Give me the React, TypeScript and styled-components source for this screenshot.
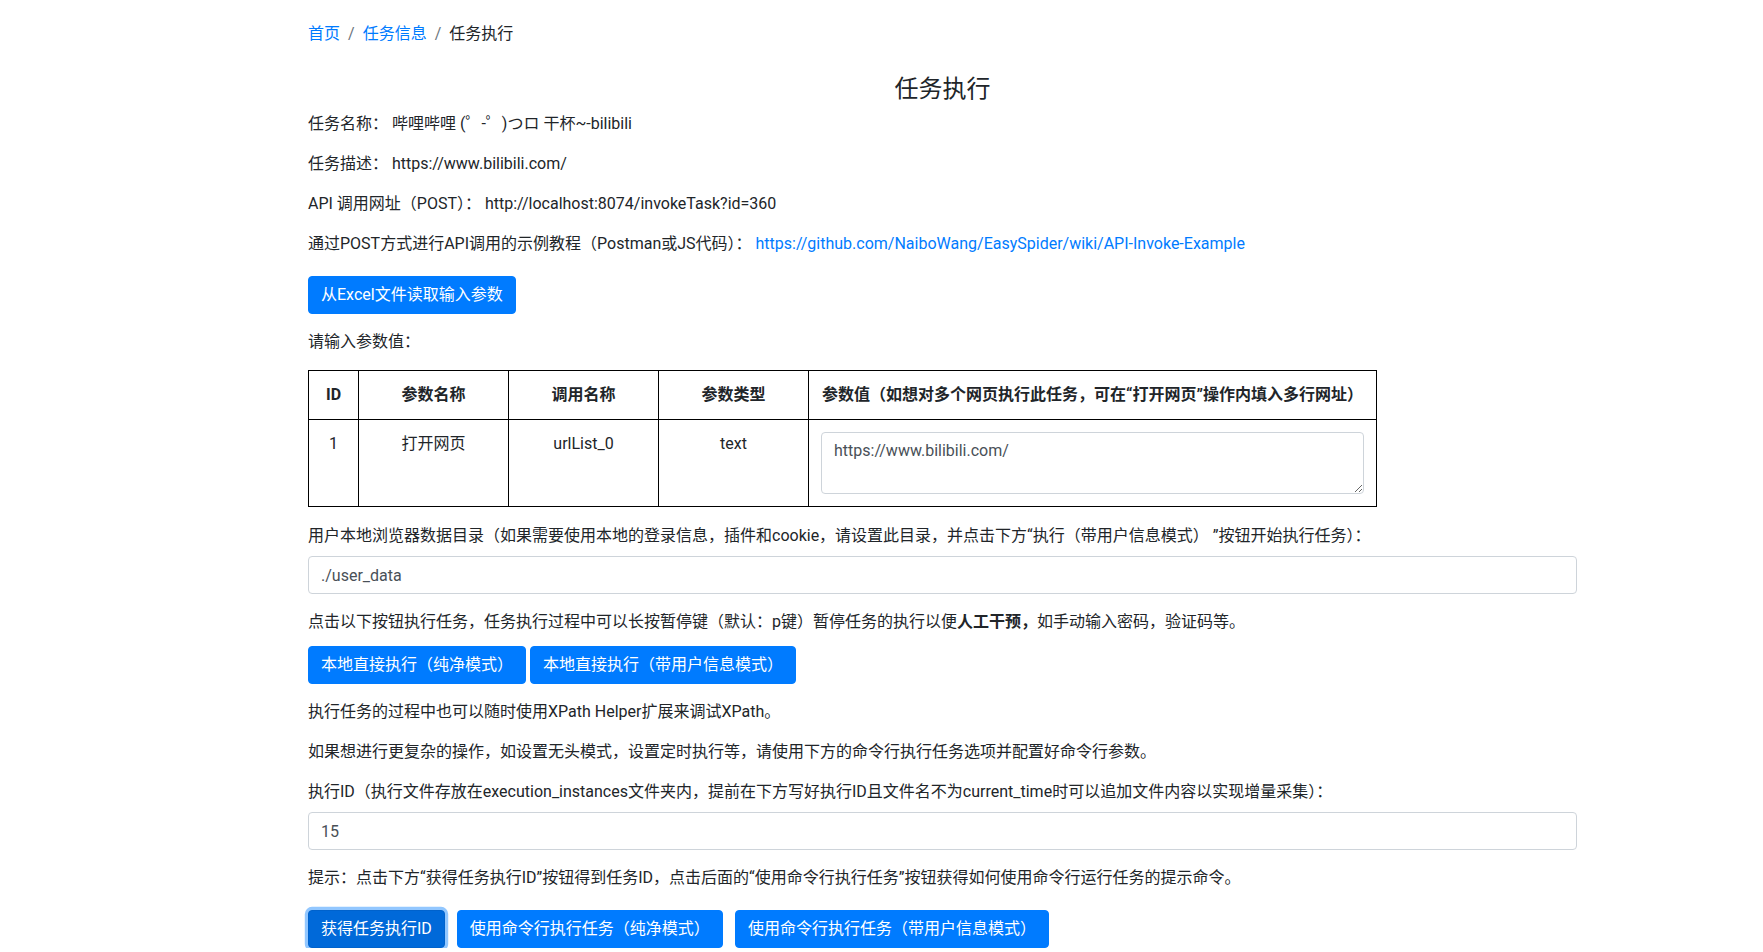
import React from 'react';
import styled, { createGlobalStyle, css } from 'styled-components';

const GlobalStyle = createGlobalStyle`
  html, body {
    margin: 0;
    padding: 0;
    background: #fff;
  }
  body {
    font-family: Roboto, "Noto Sans CJK SC", "Noto Sans", sans-serif;
    font-size: 16px;
    line-height: 1.5;
    color: #212529;
  }
  * {
    box-sizing: border-box;
  }
`;

const params = [{ id: 1, name: '打开网页', call: 'urlList_0', type: 'text', value: 'https://www.bilibili.com/' }];

const App = () => {
  return (
    <>
      <GlobalStyle />
      <Wrapper>
        <Breadcrumb>
          <Crumb>
            <CrumbLink href="#">首页</CrumbLink>
          </Crumb>
          <Crumb>
            <CrumbLink href="#">任务信息</CrumbLink>
          </Crumb>
          <Crumb $active>任务执行</Crumb>
        </Breadcrumb>

        <Title>任务执行</Title>

        <Text>任务名称： 哔哩哔哩 (゜-゜)つロ 干杯~-bilibili</Text>
        <Text>任务描述： https://www.bilibili.com/</Text>
        <Text>API 调用网址（POST）： http://localhost:8074/invokeTask?id=360</Text>
        <Text>
          通过POST方式进行API调用的示例教程（Postman或JS代码）：{' '}
          <Link href="#">https://github.com/NaiboWang/EasySpider/wiki/API-Invoke-Example</Link>
        </Text>

        <ButtonRow $top={4} $bottom={16}>
          <Button>从Excel文件读取输入参数</Button>
        </ButtonRow>

        <Text>请输入参数值：</Text>

        <ParamTable>
          <colgroup>
            <Col $w={50} />
            <Col $w={150} />
            <Col $w={150} />
            <Col $w={150} />
            <Col />
          </colgroup>
          <thead>
            <tr>
              <Th>ID</Th>
              <Th>参数名称</Th>
              <Th>调用名称</Th>
              <Th>参数类型</Th>
              <Th>参数值（如想对多个网页执行此任务，可在“打开网页”操作内填入多行网址）</Th>
            </tr>
          </thead>
          <tbody>
            {params.map((p) => (
              <tr key={p.id}>
                <Td>{p.id}</Td>
                <Td>{p.name}</Td>
                <Td>{p.call}</Td>
                <Td>{p.type}</Td>
                <Td>
                  <TextArea rows={2} defaultValue={p.value} />
                </Td>
              </tr>
            ))}
          </tbody>
        </ParamTable>

        <FormGroup>
          <Label>
            用户本地浏览器数据目录（如果需要使用本地的登录信息，插件和cookie，请设置此目录，并点击下方“执行（带用户信息模式） ”按钮开始执行任务）：
          </Label>
          <Input defaultValue="./user_data" />
        </FormGroup>

        <Text $bottom={12}>
          点击以下按钮执行任务，任务执行过程中可以长按暂停键（默认：p键）暂停任务的执行以便<b>人工干预，</b>如手动输入密码，验证码等。
        </Text>

        <ButtonRow $gap={4} $bottom={16}>
          <Button>本地直接执行（纯净模式）</Button>
          <Button>本地直接执行（带用户信息模式）</Button>
        </ButtonRow>

        <Text>执行任务的过程中也可以随时使用XPath Helper扩展来调试XPath。</Text>
        <Text>如果想进行更复杂的操作，如设置无头模式，设置定时执行等，请使用下方的命令行执行任务选项并配置好命令行参数。</Text>

        <FormGroup>
          <Label>
            执行ID（执行文件存放在execution_instances文件夹内，提前在下方写好执行ID且文件名不为current_time时可以追加文件内容以实现增量采集）：
          </Label>
          <Input defaultValue="15" />
        </FormGroup>

        <Text $bottom={20}>
          提示：点击下方“获得任务执行ID”按钮得到任务ID，点击后面的“使用命令行执行任务”按钮获得如何使用命令行运行任务的提示命令。
        </Text>

        <ButtonRow $gap={12}>
          <Button $focused>获得任务执行ID</Button>
          <Button>使用命令行执行任务（纯净模式）</Button>
          <Button>使用命令行执行任务（带用户信息模式）</Button>
        </ButtonRow>
      </Wrapper>
    </>
  );
};

export default App;

const Wrapper = styled.div`
  display: flex;
  flex-direction: column;
  align-items: flex-start;
  width: 1269px;
  margin-left: 308px;
  padding-top: 22px;
`;

const Breadcrumb = styled.ol`
  display: flex;
  margin: 0 0 29px;
  padding: 0;
  list-style: none;
`;

const Crumb = styled.li<{ $active?: boolean }>`
  color: ${({ $active }) => ($active ? '#212529' : 'inherit')};

  &:not(:first-child) {
    padding-left: 8px;
  }
  &:not(:first-child)::before {
    content: '/';
    display: inline-block;
    padding-right: 8px;
    color: #6c757d;
  }
`;

const CrumbLink = styled.a`
  color: #007bff;
  text-decoration: none;
`;

const Title = styled.h4`
  align-self: stretch;
  margin: 0 0 8.6px;
  font-size: 24px;
  font-weight: 400;
  line-height: 1.2;
  text-align: center;
`;

const Text = styled.p<{ $bottom?: number }>`
  margin: 0 0 ${({ $bottom = 16 }) => $bottom}px;

  & b {
    font-weight: 700;
  }
`;

const Link = styled.a`
  color: #007bff;
  text-decoration: none;
`;

const ButtonRow = styled.div<{ $gap?: number; $top?: number; $bottom?: number }>`
  display: flex;
  gap: ${({ $gap = 0 }) => $gap}px;
  margin-top: ${({ $top = 0 }) => $top}px;
  margin-bottom: ${({ $bottom = 0 }) => $bottom}px;
`;

const Button = styled.button<{ $focused?: boolean }>`
  height: 38px;
  padding: 6px 12px;
  border: 1px solid #007bff;
  border-radius: 4px;
  background: #007bff;
  color: #fff;
  font-family: inherit;
  font-size: 16px;
  line-height: 1.5;
  white-space: nowrap;
  cursor: pointer;

  ${({ $focused }) =>
    $focused &&
    css`
      background: #0069d9;
      border-color: #0062cc;
      box-shadow: 0 0 0 3.2px rgba(38, 143, 255, 0.5);
    `}
`;

const ParamTable = styled.table`
  width: 1069px;
  margin-bottom: 17px;
  border-collapse: collapse;
  table-layout: fixed;
`;

const Col = styled.col<{ $w?: number }>`
  width: ${({ $w }) => ($w ? `${$w}px` : 'auto')};
`;

const Th = styled.th`
  padding: 12px;
  border: 1px solid #000;
  font-weight: 700;
  text-align: center;
  vertical-align: top;
  white-space: nowrap;
`;

const Td = styled.td`
  padding: 12px;
  border: 1px solid #000;
  text-align: center;
  vertical-align: top;
`;

const TextArea = styled.textarea`
  display: block;
  width: 100%;
  height: 62px;
  padding: 6px 12px;
  border: 1px solid #ced4da;
  border-radius: 4px;
  color: #495057;
  font-family: inherit;
  font-size: 16px;
  line-height: 1.5;
  resize: vertical;
`;

const FormGroup = styled.div`
  display: flex;
  flex-direction: column;
  align-self: stretch;
  margin-bottom: 16px;
`;

const Label = styled.label`
  margin-bottom: 8px;
`;

const Input = styled.input`
  height: 38px;
  padding: 6px 12px;
  border: 1px solid #ced4da;
  border-radius: 4px;
  color: #495057;
  font-family: inherit;
  font-size: 16px;
  line-height: 1.5;
`;
